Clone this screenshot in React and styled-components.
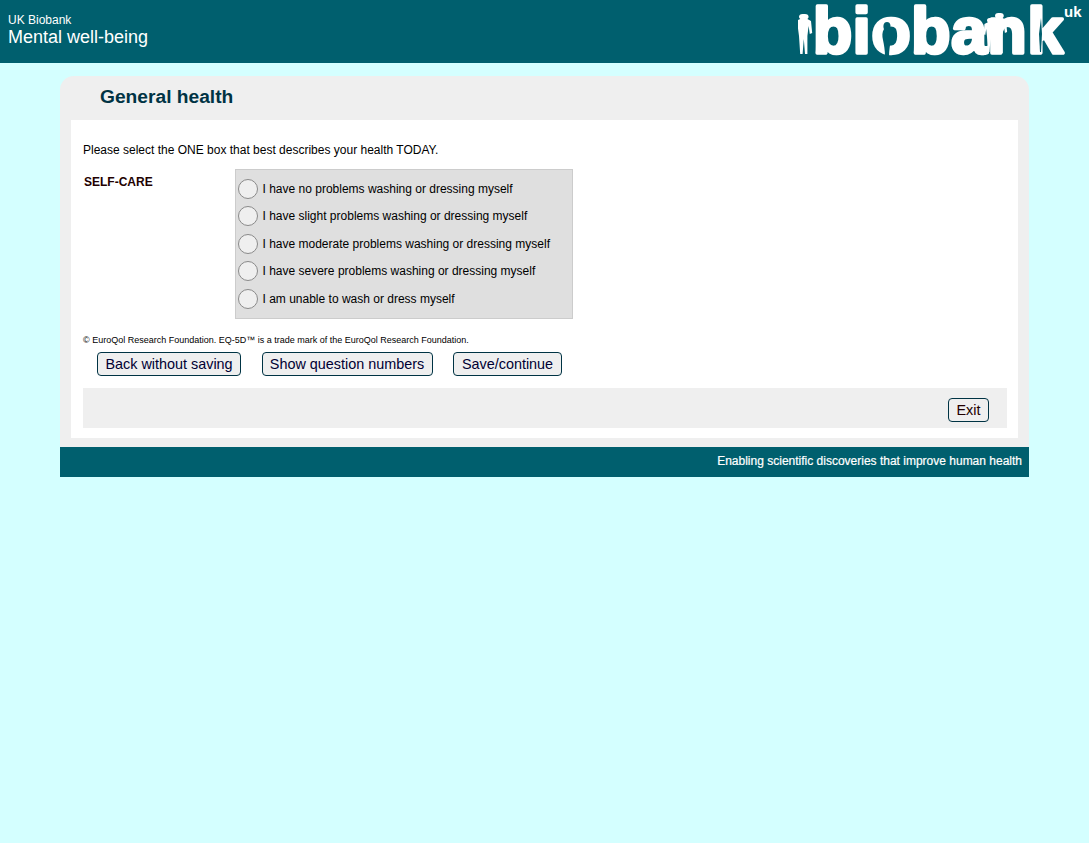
import React from 'react';
import styled, { createGlobalStyle } from 'styled-components';

const GlobalStyle = createGlobalStyle`
  html, body {
    margin: 0;
    padding: 0;
    background: #d4ffff;
    font-family: "Liberation Sans", Arial, sans-serif;
  }
`;

const Header = styled.header`
  height: 63px;
  background: #005f6e;
  display: flex;
  justify-content: space-between;
  color: #fff;
`;
const HeaderText = styled.div`
  padding: 13px 0 0 8px;
`;
const Org = styled.div`
  font-size: 12px;
  line-height: 14px;
`;
const Study = styled.div`
  font-size: 18px;
  line-height: 21px;
`;
const LogoWrap = styled.div`
  padding-right: 1px;
`;
const Page = styled.main`
  width: 969px;
  margin: 13px 0 0 60px;
`;
const Panel = styled.section`
  background: #efefef;
  border-radius: 14px 14px 0 0;
  padding: 0 11px 9px;
`;
const Title = styled.h1`
  margin: 0;
  height: 44px;
  padding-left: 29px;
  font-size: 19.2px;
  line-height: 41px;
  font-weight: 700;
  color: #003344;
`;
const Content = styled.div`
  background: #fff;
  padding: 23px 11px 10px 12px;
`;
const Intro = styled.p`
  margin: 0;
  font-size: 12px;
  line-height: 15px;
  color: #000;
`;
const Question = styled.div`
  display: flex;
  margin-top: 11px;
`;
const QuestionLabel = styled.div`
  width: 152px;
  padding: 6px 0 0 1px;
  box-sizing: border-box;
  font-size: 12px;
  line-height: 14px;
  font-weight: 700;
  color: #220000;
`;
const Options = styled.div`
  box-sizing: border-box;
  width: 338px;
  height: 150px;
  padding: 5px 0 0 2px;
  background: #dfdfdf;
  border: 1px solid #cccccc;
`;
const Option = styled.label`
  display: flex;
  align-items: center;
  gap: 4.5px;
  height: 27.5px;
  font-size: 12px;
  color: #000;
`;
const Radio = styled.span`
  box-sizing: border-box;
  width: 20px;
  height: 20px;
  border-radius: 50%;
  background: #efefef;
  border: 1.5px solid #8a8a8a;
`;
const Copyright = styled.p`
  margin: 16px 0 0;
  font-size: 9px;
  line-height: 10px;
  color: #000;
`;
const Actions = styled.div`
  display: flex;
  gap: 20.5px;
  margin: 7px 0 0 14px;
`;
const Button = styled.button`
  box-sizing: border-box;
  width: ${p => p.$width}px;
  height: 24px;
  padding: 0;
  border: 1px solid #003344;
  border-radius: 4px;
  background: #efefef;
  font-family: inherit;
  font-size: 14.4px;
  color: ${p => p.$color || '#000033'};
`;
const ExitBar = styled.div`
  display: flex;
  justify-content: flex-end;
  align-items: flex-start;
  height: 40px;
  margin-top: 12px;
  padding: 10px 18px 0 0;
  box-sizing: border-box;
  background: #efefef;
`;
const Footer = styled.footer`
  height: 30px;
  padding-right: 7px;
  background: #005f6e;
  color: #fff;
  font-size: 12px;
  line-height: 28px;
  text-align: right;
  -webkit-text-stroke: 0.2px #fff;
`;

const Person = ({ x, y, s = 1, sx = s }) => (
  <path
    transform={`translate(${x} ${y}) scale(${sx} ${s})`}
    fill="#fff"
    d="M5 0a3 3 0 0 1 3 3a3 3 0 0 1-1 2l3 2l1 12l-2 1l-1-8l-1 10l0 18h-2l-1-15l-1 15h-2l-1-18l-1-9l-1 7l-2-1l1-12l4-2a3 3 0 0 1-1-2a3 3 0 0 1 3-3z"
  />
);

const Logo = () => (
  <svg width="290" height="60" viewBox="0 0 290 60" role="img" aria-label="biobank uk">
    <text
      x="15"
      y="53"
      fontFamily="'Liberation Sans', sans-serif"
      fontSize="64"
      fontWeight="700"
      fill="#fff"
      stroke="#fff"
      strokeWidth="3.5"
      strokeLinejoin="round"
      textLength="250"
      lengthAdjust="spacing"
    >
      biobank
    </text>
    <text x="266" y="17" fontFamily="'Liberation Sans', sans-serif" fontSize="15" fontWeight="700" fill="#fff">uk</text>
    <Person x={1} y={14} sx={1.2} />
    <path d="M89 22c4 0 4 5 3 7c2 3 2 7 1 11c-1 5-2 10-2 17h-4c0-7-1-12-2-17c-1-4-1-8 1-11c-1-2-1-7 3-7z" fill="#005f6e" />
    <Person x={189} y={18} s={0.85} />
    <Person x={197} y={13} sx={1.1} />
    <path d="M243 18l1 16l-1 18h-1l-1-18z" fill="#005f6e" />
  </svg>
);

const options = [
  'I have no problems washing or dressing myself',
  'I have slight problems washing or dressing myself',
  'I have moderate problems washing or dressing myself',
  'I have severe problems washing or dressing myself',
  'I am unable to wash or dress myself',
];

export default function App() {
  return (
    <>
      <GlobalStyle />
      <Header>
        <HeaderText>
          <Org>UK Biobank</Org>
          <Study>Mental well-being</Study>
        </HeaderText>
        <LogoWrap>
          <Logo />
        </LogoWrap>
      </Header>
      <Page>
        <Panel>
          <Title>General health</Title>
          <Content>
            <Intro>Please select the ONE box that best describes your health TODAY.</Intro>
            <Question>
              <QuestionLabel>SELF-CARE</QuestionLabel>
              <Options>
                {options.map(text => (
                  <Option key={text}>
                    <Radio />
                    {text}
                  </Option>
                ))}
              </Options>
            </Question>
            <Copyright>© EuroQol Research Foundation. EQ-5D™ is a trade mark of the EuroQol Research Foundation.</Copyright>
            <Actions>
              <Button $width={144}>Back without saving</Button>
              <Button $width={171}>Show question numbers</Button>
              <Button $width={109}>Save/continue</Button>
            </Actions>
            <ExitBar>
              <Button $width={41} $color="#220000">Exit</Button>
            </ExitBar>
          </Content>
        </Panel>
        <Footer>Enabling scientific discoveries that improve human health</Footer>
      </Page>
    </>
  );
}
